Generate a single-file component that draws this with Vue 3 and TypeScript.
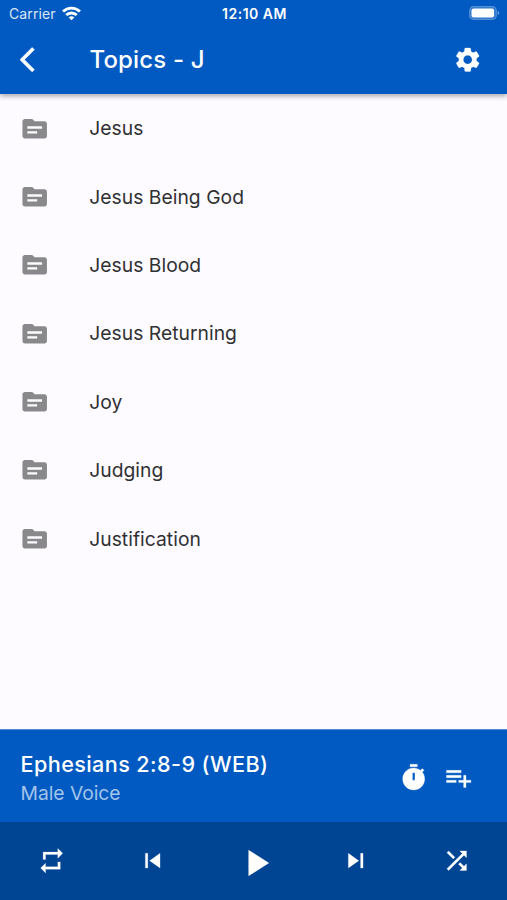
<script setup lang="ts">
import { ref } from 'vue'

const topics = ref<string[]>([
  'Jesus',
  'Jesus Being God',
  'Jesus Blood',
  'Jesus Returning',
  'Joy',
  'Judging',
  'Justification',
])
</script>

<template>
  <div class="screen">
    <header class="top">
      <div class="status">
        <div class="carrier">
          <span>Carrier</span>
          <svg class="wifi" viewBox="0 0 18 14" fill="none" stroke="currentColor" stroke-width="2.7">
            <path d="M1 5.2a11.5 11.5 0 0 1 16 0" />
            <path d="M4 8.6a7.2 7.2 0 0 1 10 0" />
            <path d="M9 13.6l-2.7-2.8a3.8 3.8 0 0 1 5.4 0z" fill="currentColor" stroke="none" />
          </svg>
        </div>
        <span class="clock">12:10 AM</span>
        <svg class="battery" viewBox="0 0 31 15">
          <rect x="0.7" y="0.7" width="26.6" height="12.6" rx="3.8" fill="#fff" fill-opacity="0.15" stroke="#fff" stroke-opacity="0.3" stroke-width="1.2" />
          <rect x="2.5" y="2.5" width="22.6" height="9" rx="2" fill="#fff" />
          <path d="M28.7 4.8q1.7 .7 1.7 2.2t-1.7 2.2z" fill="#fff" fill-opacity="0.4" />
        </svg>
      </div>
      <div class="appbar">
        <svg class="icon back" viewBox="0 0 24 24"><path d="M11.67 3.87L9.9 2.1 0 12l9.9 9.9 1.77-1.77L3.54 12z" /></svg>
        <h1>Topics - J</h1>
        <svg class="icon" viewBox="0 0 24 24"><path d="M19.14 12.94c.04-.3.06-.61.06-.94 0-.32-.02-.64-.07-.94l2.03-1.58c.18-.14.23-.41.12-.61l-1.92-3.32c-.12-.22-.37-.29-.59-.22l-2.39.96c-.5-.38-1.03-.7-1.62-.94l-.36-2.54c-.04-.24-.24-.41-.48-.41h-3.84c-.24 0-.43.17-.47.41l-.36 2.54c-.59.24-1.13.57-1.62.94l-2.39-.96c-.22-.08-.47 0-.59.22L2.74 8.87c-.12.21-.08.47.12.61l2.03 1.58c-.05.3-.09.63-.09.94s.02.64.07.94l-2.03 1.58c-.18.14-.23.41-.12.61l1.92 3.32c.12.22.37.29.59.22l2.39-.96c.5.38 1.03.7 1.62.94l.36 2.54c.05.24.24.41.48.41h3.84c.24 0 .44-.17.47-.41l.36-2.54c.59-.24 1.13-.56 1.62-.94l2.39.96c.22.08.47 0 .59-.22l1.92-3.32c.12-.22.07-.47-.12-.61l-2.01-1.58zM12 15.6c-1.98 0-3.6-1.62-3.6-3.6s1.62-3.6 3.6-3.6 3.6 1.62 3.6 3.6-1.62 3.6-3.6 3.6z" /></svg>
      </div>
    </header>

    <ul class="topics">
      <li v-for="topic in topics" :key="topic">
        <svg class="icon folder" viewBox="0 0 24 24"><path d="M20 6h-8l-2-2H4c-1.1 0-1.99.9-1.99 2L2 18c0 1.1.9 2 2 2h16c1.1 0 2-.9 2-2V8c0-1.1-.9-2-2-2zm-6 10H6v-2h8v2zm4-4H6v-2h12v2z" /></svg>
        <span>{{ topic }}</span>
      </li>
    </ul>

    <section class="playing">
      <div class="track">
        <div class="title">Ephesians 2:8-9 (WEB)</div>
        <div class="voice">Male Voice</div>
      </div>
      <svg class="icon" viewBox="0 0 24 24"><path d="M15 1H9v2h6V1zm4.03 6.39l1.42-1.42c-.43-.51-.9-.99-1.41-1.41l-1.42 1.42C16.07 4.74 14.12 4 12 4c-4.97 0-9 4.03-9 9s4.02 9 9 9 9-4.03 9-9c0-2.12-.74-4.07-1.97-5.61zM13 14h-2V8h2v6z" /></svg>
      <svg class="icon" viewBox="0 0 24 24"><path d="M14 10H2v2h12v-2zm0-4H2v2h12V6zm4 8v-4h-2v4h-4v2h4v4h2v-4h4v-2h-4zM2 16h8v-2H2v2z" /></svg>
    </section>

    <nav class="controls">
      <svg class="icon" viewBox="0 0 24 24"><path d="M7 7h10v3l4-4-4-4v3H5v6h2V7zm10 10H7v-3l-4 4 4 4v-3h12v-6h-2v4z" /></svg>
      <svg class="icon" viewBox="0 0 24 24"><path d="M6 6h2v12H6zm3.5 6l8.5 6V6z" /></svg>
      <svg class="icon play" viewBox="0 0 24 24"><path d="M8 5v14l11-7z" /></svg>
      <svg class="icon" viewBox="0 0 24 24"><path d="M6 18l8.5-6L6 6v12zM16 6v12h2V6h-2z" /></svg>
      <svg class="icon" viewBox="0 0 24 24"><path d="M10.59 9.17L5.41 4 4 5.41l5.17 5.17 1.42-1.41zM14.5 4l2.04 2.04L4 18.59 5.41 20 17.96 7.46 20 9.5V4h-5.5zm.33 9.41l-1.41 1.41 3.13 3.13L14.5 20H20v-5.5l-2.04 2.04-3.13-3.13z" /></svg>
    </nav>
  </div>
</template>

<style>
body {
  background: #fdfbff;
}
</style>

<style scoped>
.screen {
  display: flex;
  flex-direction: column;
  height: 900px;
  overflow: hidden;
  background: #fdfbff;
  color: #fff;
  font-family: Inter, 'Liberation Sans', sans-serif;
}
.icon {
  flex: none;
  width: 29.4px;
  height: 29.4px;
  fill: currentColor;
  stroke: currentColor;
  stroke-width: 0.2;
}
.top {
  flex: none;
  box-sizing: border-box;
  height: 94px;
  background: #005ac1;
  box-shadow: 0 2px 5px rgba(0, 0, 0, 0.35);
}
.status {
  display: grid;
  grid-template-columns: 1fr auto 1fr;
  align-items: center;
  height: 27px;
  padding: 0 7px 0 9px;
  font-size: 14px;
}
.carrier {
  display: flex;
  align-items: center;
  gap: 6px;
  letter-spacing: 0.1px;
}
.carrier span {
  opacity: 0.85;
}
.wifi {
  width: 19px;
  height: 14.8px;
}
.clock {
  font-size: 14px;
  font-weight: 600;
  letter-spacing: 0.5px;
}
.battery {
  justify-self: end;
  width: 31px;
  height: 15px;
}
.appbar {
  display: flex;
  align-items: center;
  height: 66px;
  padding: 0 24.6px 0 20px;
}
.back {
  stroke-width: 0.6;
}
h1 {
  flex: 1;
  margin: 0 0 0 40.1px;
  font-size: 24px;
  font-weight: 500;
  line-height: 30px;
  letter-spacing: 0.17px;
}
.topics {
  flex: 1;
  margin: 0;
  padding: 0;
  list-style: none;
}
.topics li {
  display: flex;
  align-items: center;
  gap: 39.8px;
  height: 68.4px;
  padding-left: 20px;
  color: #303033;
  font-size: 19.3px;
  letter-spacing: 0.03px;
}
.folder {
  color: #89898c;
  stroke: none;
}
.playing {
  flex: none;
  display: flex;
  align-items: center;
  box-sizing: border-box;
  height: 93.5px;
  padding: 3px 34px 0 20.6px;
  gap: 15px;
  border-top: 1px solid #4d8cd5;
  background: #005ac1;
}
.track {
  flex: 1;
  padding-top: 3px;
}
.title {
  font-size: 21.6px;
  font-weight: 500;
  line-height: 29px;
  letter-spacing: 0.4px;
}
.voice {
  color: #a3c3ea;
  font-size: 19.3px;
  line-height: 29px;
  letter-spacing: -0.05px;
}
.controls {
  flex: none;
  display: grid;
  grid-template-columns: repeat(5, 1fr);
  align-items: center;
  justify-items: center;
  box-sizing: border-box;
  height: 78px;
  padding-left: 1px;
  background: #004494;
}
.play {
  width: 44px;
  height: 44px;
  margin: 4px 0 0 4px;
}
</style>
